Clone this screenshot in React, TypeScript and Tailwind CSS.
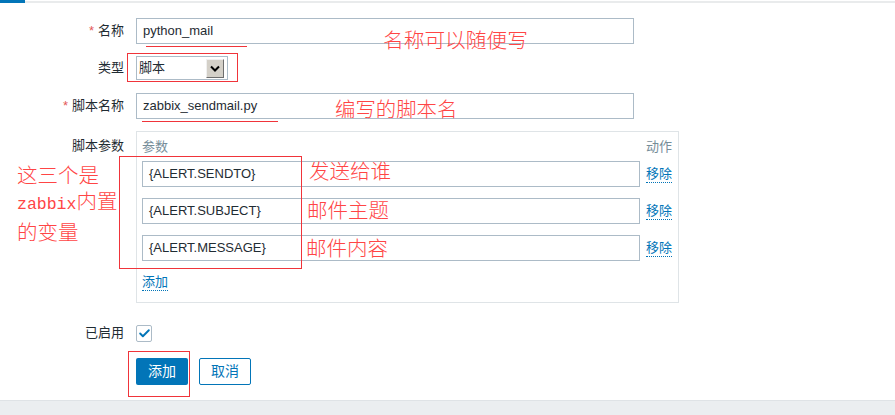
import { Check } from 'lucide-react';

const cjk = '"Liberation Sans", "Noto Sans CJK SC", sans-serif';
const note = { fontFamily: '"Noto Sans CJK SC", sans-serif' };

const params = ['{ALERT.SENDTO}', '{ALERT.SUBJECT}', '{ALERT.MESSAGE}'];

const Label = ({ text, required }: { text: string; required?: boolean }) => (
    <div className="w-[124px] shrink-0 text-right text-[13px] text-[#1f2c33] leading-[18px]">
        {required && <span className="text-[#e45959] mr-[4px]">*</span>}
        {text}
    </div>
);

const TextInput = ({ value, width }: { value: string; width: string }) => (
    <div className={`${width} h-[26px] border border-[#acbbc7] bg-white px-[6px] flex items-center text-[13px] text-[#1f2c33]`}>
        {value}
    </div>
);

export default function App() {
    return (
        <div className="relative w-[895px] h-[415px] bg-white overflow-hidden flex flex-col" style={{ fontFamily: cjk }}>
            <div className="flex h-[3px] shrink-0">
                <div className="w-[25px] bg-[#0275b8]" />
                <div className="flex-1 mt-px h-[2px] bg-[#e9ebec]" />
            </div>

            <div className="flex flex-col pt-[15px]">
                <div className="flex items-center gap-3">
                    <Label text="名称" required />
                    <TextInput value="python_mail" width="w-[498px]" />
                </div>

                <div className="flex items-center gap-3 mt-[12px]">
                    <Label text="类型" />
                    <div className="w-[92px] h-[24px] border border-[#acbbc7] bg-white flex items-center justify-between pl-[2px] pr-[3px] text-[13px] text-[#1f2c33]">
                        <span>脚本</span>
                        <div className="w-[18px] h-[19px] bg-[#d4d0c8] border border-t-[#f0f0f0] border-l-[#f0f0f0] border-r-[#6e6e6e] border-b-[#6e6e6e] flex items-center justify-center">
                            <svg width="10" height="7" viewBox="0 0 10 7">
                                <path d="M1 1.5 L5 5.5 L9 1.5" fill="none" stroke="#000" strokeWidth="2" />
                            </svg>
                        </div>
                    </div>
                </div>

                <div className="flex items-center gap-3 mt-[13px]">
                    <Label text="脚本名称" required />
                    <TextInput value="zabbix_sendmail.py" width="w-[498px]" />
                </div>

                <div className="flex items-start gap-3 mt-[12px]">
                    <div className="pt-[6px]">
                        <Label text="脚本参数" />
                    </div>
                    <div className="w-[543px] h-[172px] border border-[#dfe4e7] pl-[5px] pr-[6px] pt-[6px]">
                        <div className="grid grid-cols-[498px_1fr] gap-x-[6px] text-[13px] text-[#768d99] leading-[18px]">
                            <span>参数</span>
                            <span>动作</span>
                        </div>
                        <div className="flex flex-col gap-[11px] mt-[5px]">
                            {params.map(p => (
                                <div key={p} className="grid grid-cols-[498px_1fr] gap-x-[6px] items-center">
                                    <TextInput value={p} width="w-[498px]" />
                                    <span className="text-[13px] text-[#0275b8] leading-[16px] border-b border-dotted border-[#0275b8] w-fit">移除</span>
                                </div>
                            ))}
                        </div>
                        <span className="inline-block mt-[13px] text-[13px] text-[#0275b8] leading-[16px] border-b border-dotted border-[#0275b8]">添加</span>
                    </div>
                </div>

                <div className="flex items-center gap-3 mt-[21px]">
                    <Label text="已启用" />
                    <div className="w-[16px] h-[17px] border border-[#acbbc7] rounded-[2px] bg-white flex items-center justify-center">
                        <Check size={13} strokeWidth={3.5} color="#0275b8" />
                    </div>
                </div>

                <div className="flex items-center gap-[11px] mt-[16px] pl-[136px]">
                    <button className="w-[52px] h-[27px] rounded-[2px] bg-[#0275b8] text-white text-[14px]">添加</button>
                    <button className="w-[52px] h-[27px] rounded-[2px] border border-[#0275b8] bg-white text-[#0275b8] text-[14px]">取消</button>
                </div>
            </div>

            <div className="mt-auto h-[15px] bg-[#ebeef0] border-t border-[#dfe3e6]" />

            {/* red annotations */}
            <div className="absolute left-[146px] top-[46px] w-[101px] h-px bg-[#f0343a]" />
            <div className="absolute left-[142px] top-[121px] w-[136px] h-px bg-[#f0343a]" />
            <div className="absolute left-[127px] top-[53px] w-[111px] h-[29px] border border-[#f0343a]" />
            <div className="absolute left-[119px] top-[156px] w-[183px] h-[113px] border border-[#f0343a]" />
            <div className="absolute left-[128px] top-[351px] w-[62px] h-[46px] border border-[#f0343a]" />

            <div className="absolute left-[383px] top-[29px] text-[20.7px] leading-none font-light text-[#ff4545]" style={note}>名称可以随便写</div>
            <div className="absolute left-[335px] top-[98px] text-[20.4px] leading-none font-light text-[#ff4545]" style={note}>编写的脚本名</div>
            <div className="absolute left-[309px] top-[160px] text-[20.5px] leading-none font-light text-[#ff4545]" style={note}>发送给谁</div>
            <div className="absolute left-[307px] top-[199px] text-[20.5px] leading-none font-light text-[#ff4545]" style={note}>邮件主题</div>
            <div className="absolute left-[306px] top-[237px] text-[20.5px] leading-none font-light text-[#ff4545]" style={note}>邮件内容</div>
            <div className="absolute left-[17px] top-[161px] text-[20.5px] leading-[26px] font-light text-[#ff4545]" style={note}>
                <div>这三个是</div>
                <div>
                    <span className="text-[16.5px] font-normal" style={{ fontFamily: '"Liberation Mono", monospace' }}>zabbix</span>内置
                </div>
                <div>的变量</div>
            </div>
        </div>
    );
}
